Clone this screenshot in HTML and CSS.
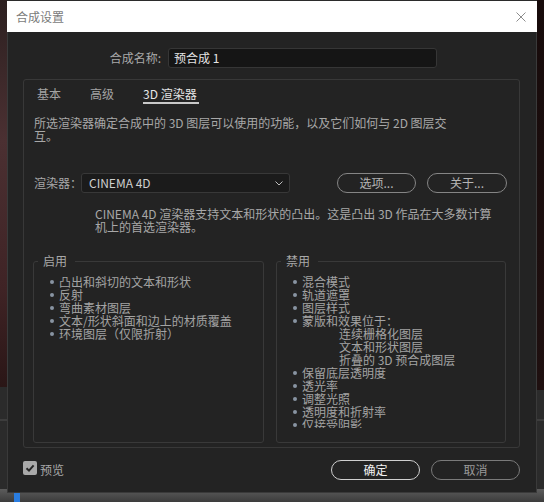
FILE: index.html
```html
<!DOCTYPE html>
<html lang="zh-CN">
<head>
<meta charset="utf-8">
<title>合成设置</title>
<link rel="stylesheet" href="styles.css">
</head>
<body>
<div class="desktop">
  <div class="dialog">
    <div class="titlebar">
      <span class="title">合成设置</span>
      <svg class="close" width="10" height="10" viewBox="0 0 10 10"><path d="M0.5 0.5L9.5 9.5M9.5 0.5L0.5 9.5" stroke="#8c8c8c" stroke-width="1" fill="none"/></svg>
    </div>
    <div class="name-row">
      <span class="name-label">合成名称:</span>
      <div class="name-input">预合成 1</div>
    </div>
    <div class="panel">
      <div class="tabs">
        <span class="tab">基本</span>
        <span class="tab">高级</span>
        <span class="tab active">3D 渲染器</span>
      </div>
      <p class="desc">所选渲染器确定合成中的 3D 图层可以使用的功能，以及它们如何与 2D 图层交<br>互。</p>
      <div class="renderer-row">
        <span class="r-label">渲染器：</span>
        <div class="dropdown">
          <span>CINEMA 4D</span>
          <svg width="8" height="5" viewBox="0 0 8 5"><path d="M0.5 0.5L4 4L7.5 0.5" fill="none" stroke="#bdbdbd" stroke-width="1"/></svg>
        </div>
        <span class="btn btn-options">选项...</span>
        <span class="btn btn-about">关于...</span>
      </div>
      <p class="desc2">CINEMA 4D 渲染器支持文本和形状的凸出。这是凸出 3D 作品在大多数计算<br>机上的首选渲染器。</p>
      <div class="groups">
        <fieldset class="group group-left">
          <legend>启用</legend>
          <div class="list-clip">
            <ul class="list">
              <li>凸出和斜切的文本和形状</li>
              <li>反射</li>
              <li>弯曲素材图层</li>
              <li>文本/形状斜面和边上的材质覆盖</li>
              <li>环境图层（仅限折射）</li>
            </ul>
          </div>
        </fieldset>
        <fieldset class="group group-right">
          <legend>禁用</legend>
          <div class="list-clip">
            <ul class="list">
              <li>混合模式</li>
              <li>轨道遮罩</li>
              <li>图层样式</li>
              <li>蒙版和效果位于：</li>
              <li class="sub">连续栅格化图层</li>
              <li class="sub">文本和形状图层</li>
              <li class="sub">折叠的 3D 预合成图层</li>
              <li>保留底层透明度</li>
              <li>透光率</li>
              <li>调整光照</li>
              <li>透明度和折射率</li>
              <li>仅接受阴影</li>
            </ul>
          </div>
        </fieldset>
      </div>
    </div>
    <div class="footer">
      <span class="checkbox"><svg width="14" height="14" viewBox="0 0 14 14"><path d="M3.5 7.2L6 9.6L10.6 4.4" fill="none" stroke="#262626" stroke-width="2"/></svg></span>
      <span class="check-label">预览</span>
      <span class="btn btn-ok">确定</span>
      <span class="btn btn-cancel">取消</span>
    </div>
  </div>
</div>
</body>
</html>
```
FILE: styles.css
```css
html, body {
  margin: 0;
  padding: 0;
}

body {
  background: #2d2d2d;
  font-family: "Noto Sans CJK SC", "Noto Sans", sans-serif;
  font-size: 12px;
  color: #aaaaaa;
}

.desktop {
  position: relative;
  width: 544px;
  height: 502px;
  overflow: hidden;
  background:
    linear-gradient(180deg, #2c2020 0, #4b3032 140px, #3f2325 290px, #2a1616 387px) 0 0 / 7px 387px no-repeat,
    linear-gradient(180deg, #170b0b 0, #1f1010 390px) 537px 0 / 7px 390px no-repeat,
    linear-gradient(#2a7de0, #2a7de0) 14px 492px / 6px 10px no-repeat,
    linear-gradient(180deg, #2b2b2b 0, #2b2b2b 419px, #3d3d3d 419px, #3d3d3d 421px, #2b2b2b 421px, #2b2b2b 489px, #5c5c5c 489px, #3c3c3c 502px);
}

.dialog {
  position: absolute;
  left: 7px;
  top: 1px;
  width: 530px;
  height: 492px;
  background: #232323;
  box-shadow: inset 1px 0 #3a3a3a, inset -1px 0 #3a3a3a, inset 0 -1px #3a3a3a;
  display: flex;
  flex-direction: column;
}

.titlebar {
  height: 31px;
  background: #ffffff;
  display: flex;
  align-items: center;
  justify-content: space-between;
  padding: 0 11px 0 9px;
}

.title {
  color: #7b7b7b;
  line-height: 16px;
}

.close {
  display: block;
}

.name-row {
  display: flex;
  align-items: center;
  margin-top: 16px;
  height: 20px;
}

.name-label {
  width: 154px;
  text-align: right;
  margin-right: 7px;
  color: #a9a9a9;
  line-height: 16px;
}

.name-input {
  width: 269px;
  height: 20px;
  box-sizing: border-box;
  background: #151515;
  border: 1px solid #363636;
  border-radius: 3px;
  padding-left: 5px;
  color: #e4e4e4;
  line-height: 18px;
}

.panel {
  margin: 11px 17px 0 16px;
  height: 369px;
  box-sizing: border-box;
  border: 1px solid #383838;
  border-radius: 3px;
  display: flex;
  flex-direction: column;
}

.tabs {
  display: flex;
  gap: 29px;
  padding: 6px 0 0 13px;
  height: 24px;
  box-sizing: border-box;
}

.tab {
  line-height: 16px;
  height: 16px;
  color: #a3a3a3;
}

.tab.active {
  color: #e6e6e6;
  border-bottom: 2px solid #c9c9c9;
  padding-right: 2px;
}

.desc {
  margin: 12px 0 0 10px;
  line-height: 13px;
  color: #a8a8a8;
  white-space: nowrap;
}

.renderer-row {
  display: flex;
  align-items: center;
  margin: 31px 0 0 10px;
  height: 20px;
}

.r-label {
  flex: none;
  width: 47px;
  white-space: nowrap;
  color: #a8a8a8;
  line-height: 16px;
}

.dropdown {
  flex: none;
  width: 209px;
  height: 20px;
  box-sizing: border-box;
  background: #1b1b1b;
  border: 1px solid #383838;
  border-radius: 3px;
  display: flex;
  align-items: center;
  justify-content: space-between;
  padding: 0 6px 0 7px;
  color: #cfcfcf;
  line-height: 18px;
}

.dropdown svg {
  display: block;
}

.btn {
  flex: none;
  height: 20px;
  box-sizing: border-box;
  border: 1px solid #858585;
  border-radius: 10px;
  color: #b5b5b5;
  text-align: center;
  line-height: 18px;
  white-space: nowrap;
}

.btn-options {
  width: 79px;
  margin-left: 47px;
}

.btn-about {
  width: 80px;
  margin-left: 11px;
}

.desc2 {
  margin: 14px 0 0 71px;
  line-height: 13px;
  color: #a8a8a8;
  white-space: nowrap;
}

.groups {
  display: flex;
  gap: 12px;
  margin: 20px 13px 4px 9px;
  flex: 1;
  min-height: 0;
}

.group {
  margin: 0;
  padding: 0 0 0 4px;
  border: 1px solid #393939;
  border-radius: 3px;
  min-width: 0;
  box-sizing: border-box;
}

.group-left {
  width: 231px;
}

.group-right {
  width: 230px;
}

.group legend {
  padding: 0 8px 0 5px;
  line-height: 16px;
  color: #a8a8a8;
}

.list-clip {
  height: 156px;
  overflow: hidden;
  margin-top: 3px;
  padding-top: 3px;
  box-sizing: border-box;
  padding-right: 6px;
}

.list {
  list-style: none;
  margin: 0;
  padding: 0;
}

.list li {
  display: flex;
  align-items: center;
  line-height: 13px;
  height: 13px;
  color: #a3a3a3;
  white-space: nowrap;
}

.list li::before {
  content: "";
  flex: none;
  width: 4px;
  height: 4px;
  border-radius: 50%;
  background: #8894a2;
  margin: 0 5px 0 12px;
}

.list li.sub {
  padding-left: 58px;
}

.list li.sub::before {
  display: none;
}

.footer {
  display: flex;
  align-items: center;
  margin: 12px 17px 0 16px;
  height: 20px;
}

.checkbox {
  width: 14px;
  height: 14px;
  border-radius: 2px;
  background: #a9a9a9;
  align-self: flex-start;
  margin-top: 1px;
}

.checkbox svg {
  display: block;
}

.check-label {
  margin-left: 3px;
  color: #a8a8a8;
  line-height: 16px;
}

.btn-ok {
  width: 89px;
  margin-left: auto;
  border-color: #cfcfcf;
  color: #f2f2f2;
}

.btn-cancel {
  width: 89px;
  margin-left: 11px;
  border-color: #7a7a7a;
  color: #9a9a9a;
}
```
